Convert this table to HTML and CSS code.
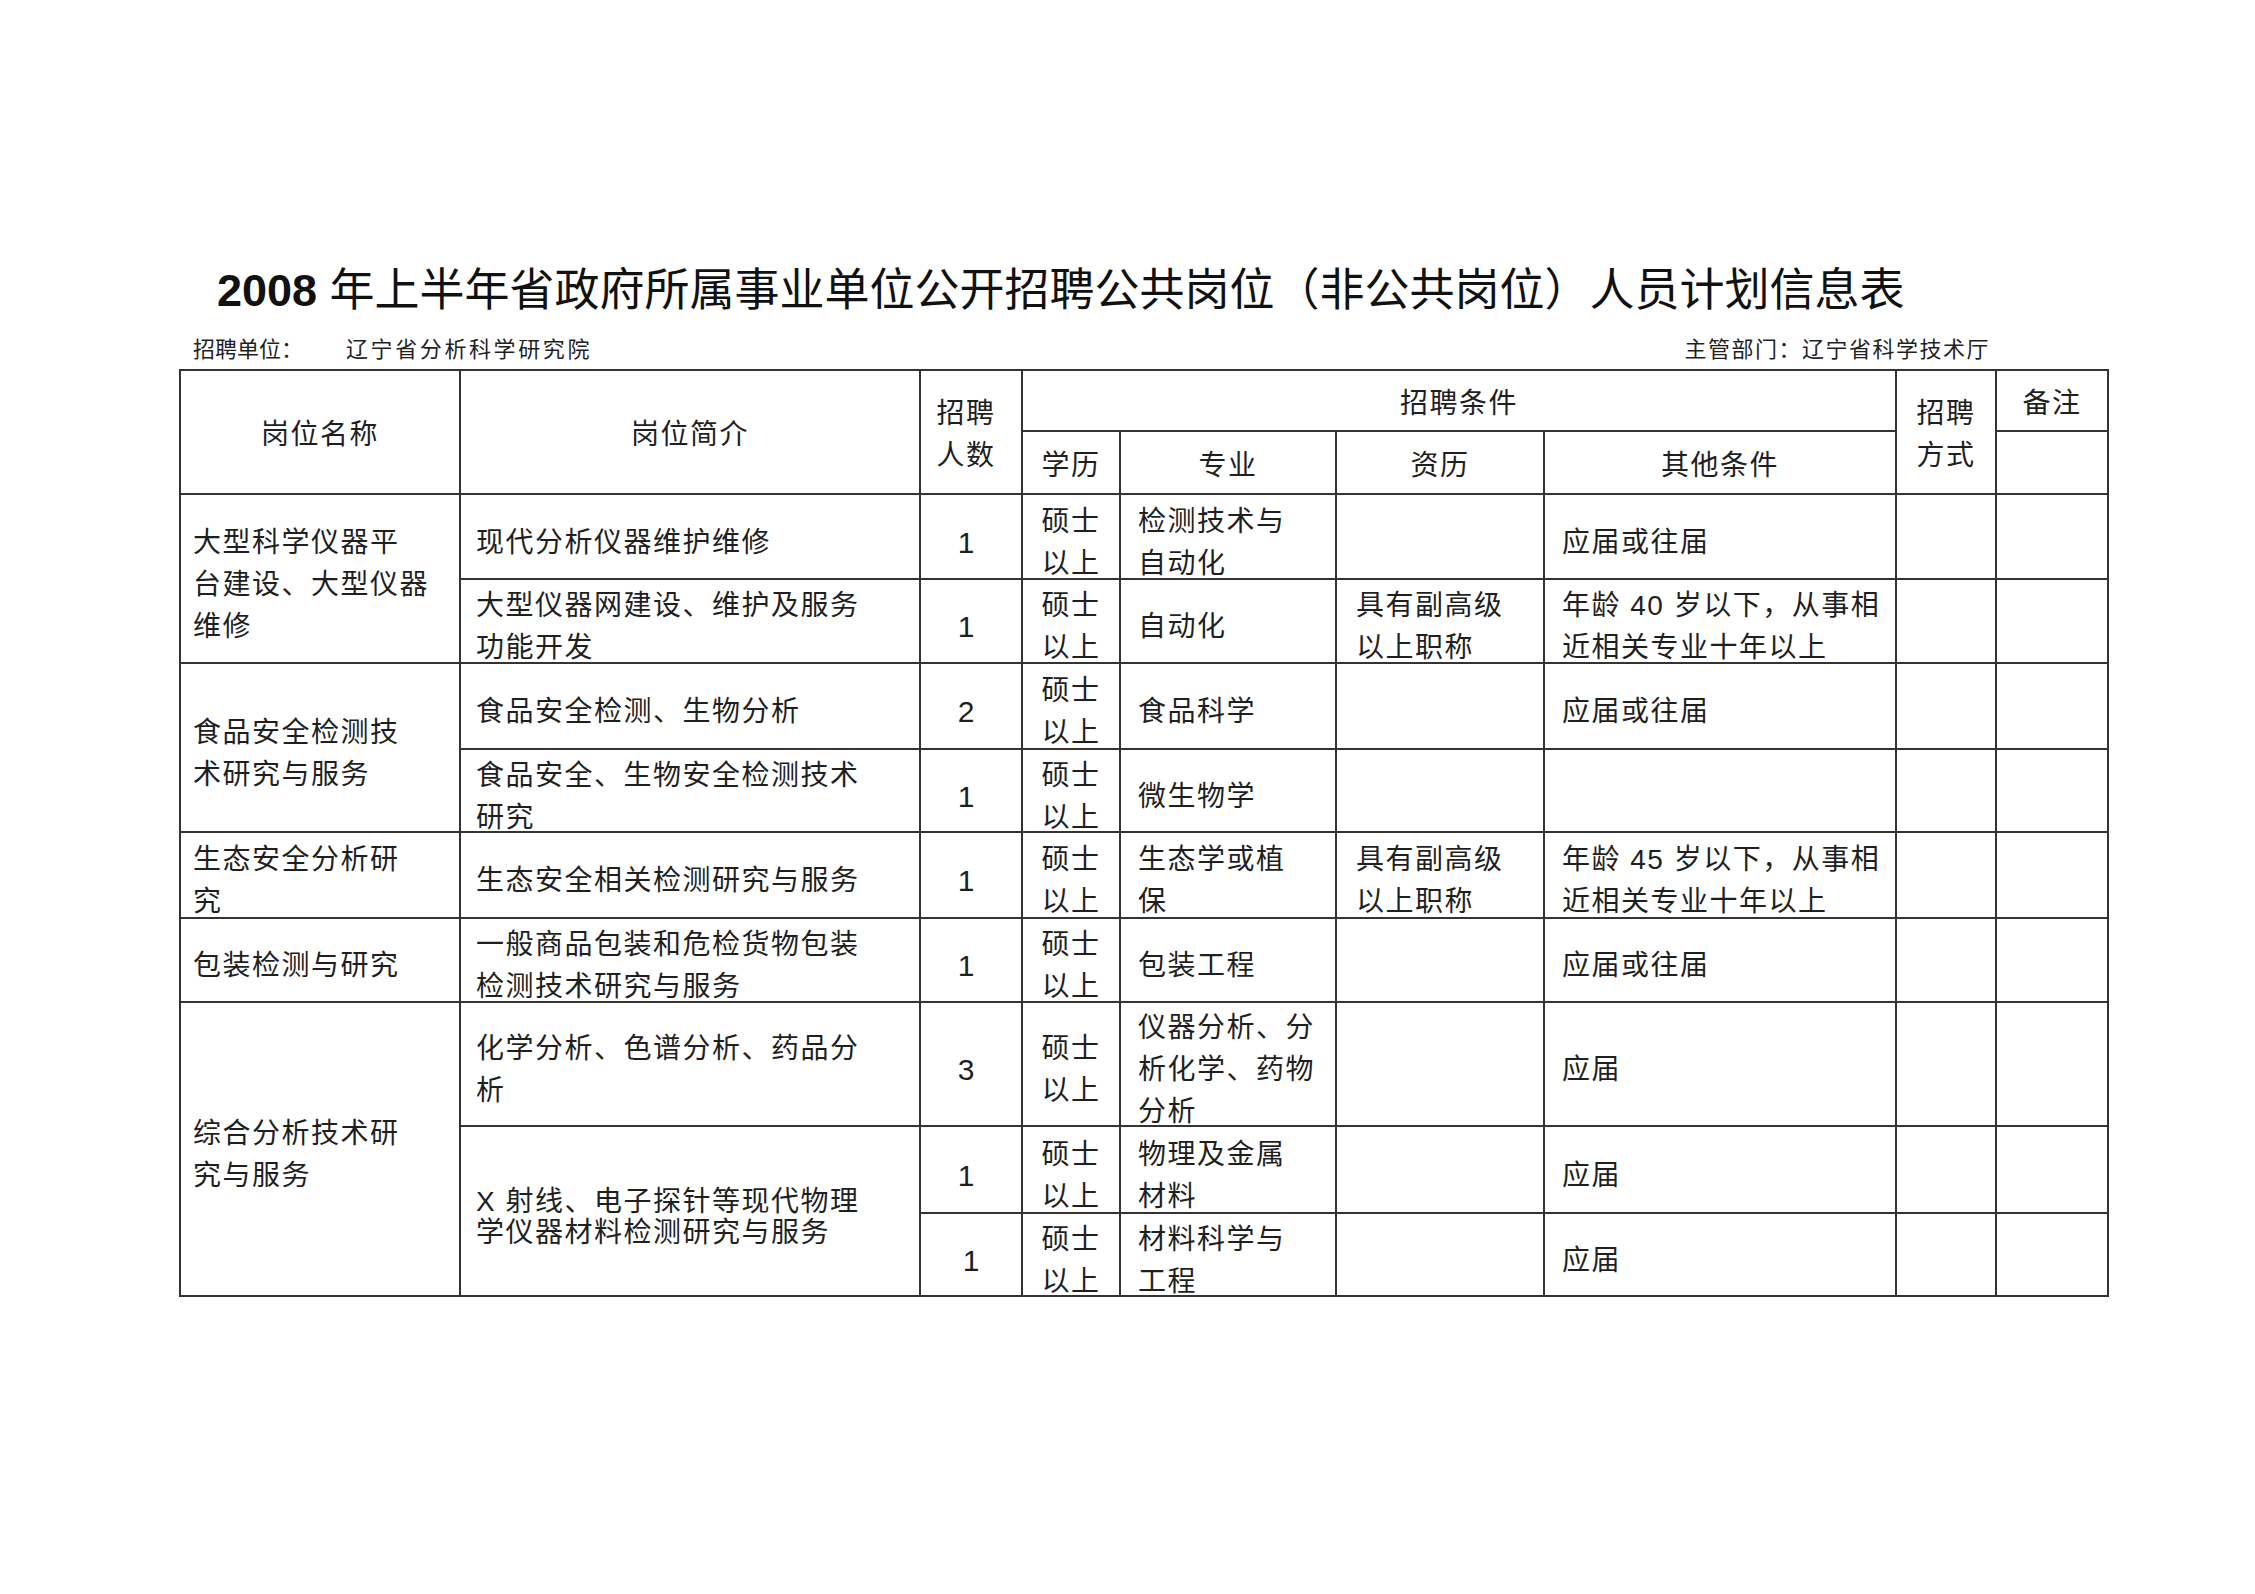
FILE: index.html
```html
<!DOCTYPE html>
<html lang="zh-CN">
<head>
<meta charset="utf-8">
<title>2008年上半年省政府所属事业单位公开招聘人员计划信息表</title>
<link rel="stylesheet" href="styles.css">
</head>
<body>
<div class="page">
  <h1 class="title"><span class="year">2008</span> 年上半年省政府所属事业单位公开招聘公共岗位（非公共岗位）人员计划信息表</h1>
  <div class="meta">
    <div class="unit">招聘单位：<span class="unit-name">辽宁省分析科学研究院</span></div>
    <div class="dept">主管部门：辽宁省科学技术厅</div>
  </div>
  <div class="sheet">
    <!-- header row 1 -->
    <div class="c h rs2">岗位名称</div>
    <div class="c h rs2">岗位简介</div>
    <div class="c h rs2 count-h">招聘<br>人数</div>
    <div class="c h cs4">招聘条件</div>
    <div class="c h rs2">招聘<br>方式</div>
    <div class="c h">备注</div>
    <!-- header row 2 -->
    <div class="c h">学历</div>
    <div class="c h">专业</div>
    <div class="c h">资历</div>
    <div class="c h">其他条件</div>
    <div class="c"></div>

    <!-- R1 -->
    <div class="c name rs2">大型科学仪器平<br>台建设、大型仪器<br>维修</div>
    <div class="c desc">现代分析仪器维护维修</div>
    <div class="c num">1</div>
    <div class="c edu">硕士<br>以上</div>
    <div class="c major">检测技术与<br>自动化</div>
    <div class="c exp"></div>
    <div class="c other">应届或往届</div>
    <div class="c"></div>
    <div class="c"></div>
    <!-- R2 -->
    <div class="c desc">大型仪器网建设、维护及服务<br>功能开发</div>
    <div class="c num">1</div>
    <div class="c edu">硕士<br>以上</div>
    <div class="c major">自动化</div>
    <div class="c exp">具有副高级<br>以上职称</div>
    <div class="c other">年龄 40 岁以下，从事相<br>近相关专业十年以上</div>
    <div class="c"></div>
    <div class="c"></div>
    <!-- R3 -->
    <div class="c name rs2">食品安全检测技<br>术研究与服务</div>
    <div class="c desc">食品安全检测、生物分析</div>
    <div class="c num">2</div>
    <div class="c edu">硕士<br>以上</div>
    <div class="c major">食品科学</div>
    <div class="c exp"></div>
    <div class="c other">应届或往届</div>
    <div class="c"></div>
    <div class="c"></div>
    <!-- R4 -->
    <div class="c desc">食品安全、生物安全检测技术<br>研究</div>
    <div class="c num">1</div>
    <div class="c edu">硕士<br>以上</div>
    <div class="c major">微生物学</div>
    <div class="c exp"></div>
    <div class="c other"></div>
    <div class="c"></div>
    <div class="c"></div>
    <!-- R5 -->
    <div class="c name">生态安全分析研<br>究</div>
    <div class="c desc">生态安全相关检测研究与服务</div>
    <div class="c num">1</div>
    <div class="c edu">硕士<br>以上</div>
    <div class="c major">生态学或植<br>保</div>
    <div class="c exp">具有副高级<br>以上职称</div>
    <div class="c other">年龄 45 岁以下，从事相<br>近相关专业十年以上</div>
    <div class="c"></div>
    <div class="c"></div>
    <!-- R6 -->
    <div class="c name">包装检测与研究</div>
    <div class="c desc">一般商品包装和危检货物包装<br>检测技术研究与服务</div>
    <div class="c num">1</div>
    <div class="c edu">硕士<br>以上</div>
    <div class="c major">包装工程</div>
    <div class="c exp"></div>
    <div class="c other">应届或往届</div>
    <div class="c"></div>
    <div class="c"></div>
    <!-- R7 -->
    <div class="c name rs3">综合分析技术研<br>究与服务</div>
    <div class="c desc">化学分析、色谱分析、药品分<br>析</div>
    <div class="c num">3</div>
    <div class="c edu">硕士<br>以上</div>
    <div class="c major">仪器分析、分<br>析化学、药物<br>分析</div>
    <div class="c exp"></div>
    <div class="c other">应届</div>
    <div class="c"></div>
    <div class="c"></div>
    <!-- R8 -->
    <div class="c desc tight rs2">X 射线、电子探针等现代物理<br>学仪器材料检测研究与服务</div>
    <div class="c num">1</div>
    <div class="c edu">硕士<br>以上</div>
    <div class="c major">物理及金属<br>材料</div>
    <div class="c exp"></div>
    <div class="c other">应届</div>
    <div class="c"></div>
    <div class="c"></div>
    <!-- R9 -->
    <div class="c num last">1</div>
    <div class="c edu">硕士<br>以上</div>
    <div class="c major">材料科学与<br>工程</div>
    <div class="c exp"></div>
    <div class="c other">应届</div>
    <div class="c"></div>
    <div class="c"></div>
  </div>
</div>
</body>
</html>
```

FILE: styles.css
```css
html, body {
  margin: 0;
  padding: 0;
  background: #ffffff;
}

body {
  font-family: "Liberation Sans", "Noto Sans CJK SC", sans-serif;
  color: #1f1f1f;
  width: 2255px;
  height: 1594px;
  overflow: hidden;
}

.page {
  display: flex;
  flex-direction: column;
}

.title {
  margin: 0;
  padding: 261px 0 0 217px;
  font-size: 45px;
  line-height: 60px;
  font-weight: 400;
  letter-spacing: 0;
  white-space: nowrap;
  color: #111;
}

.title .year {
  font-weight: 700;
}

.meta {
  margin: 14px 0 0 193px;
  width: 1797px;
  height: 30px;
  display: flex;
  justify-content: space-between;
  font-size: 22px;
  line-height: 30px;
  white-space: nowrap;
}

.unit-name {
  margin-left: 43px;
  letter-spacing: 2.6px;
}

.dept {
  letter-spacing: 1.5px;
}

.sheet {
  margin: 4px 0 0 179px;
  width: 1926px;
  display: grid;
  grid-template-columns: 278px 458px 100px 96px 214px 206px 350px 98px 110px;
  grid-template-rows: 59px 61px 83px 82px 84px 81px 84px 82px 122px 85px 81px;
  gap: 2px;
  padding: 2px;
  background: #333333;
}

.c {
  background: #ffffff;
  display: flex;
  flex-direction: column;
  justify-content: center;
  font-size: 28px;
  line-height: 42px;
  letter-spacing: 1.5px;
  padding-top: 12px;
  white-space: nowrap;
  min-width: 0;
  min-height: 0;
}

.h {
  text-align: center;
  padding-top: 6px;
  line-height: 42px;
}

.h.count-h { padding-right: 10px; }

.rs2 { grid-row: span 2; }
.rs3 { grid-row: span 3; }
.cs4 { grid-column: span 4; }

.name { padding-left: 12px; }
.desc { padding-left: 15px; }
.desc.tight { line-height: 31px; }
.num {
  text-align: center;
  font-size: 30px;
  letter-spacing: 0;
  padding-right: 10px;
}
.num.last { padding-right: 0; }
.edu { text-align: center; }
.major { padding-left: 17px; }
.exp { padding-left: 19px; }
.other { padding-left: 17px; }
```
